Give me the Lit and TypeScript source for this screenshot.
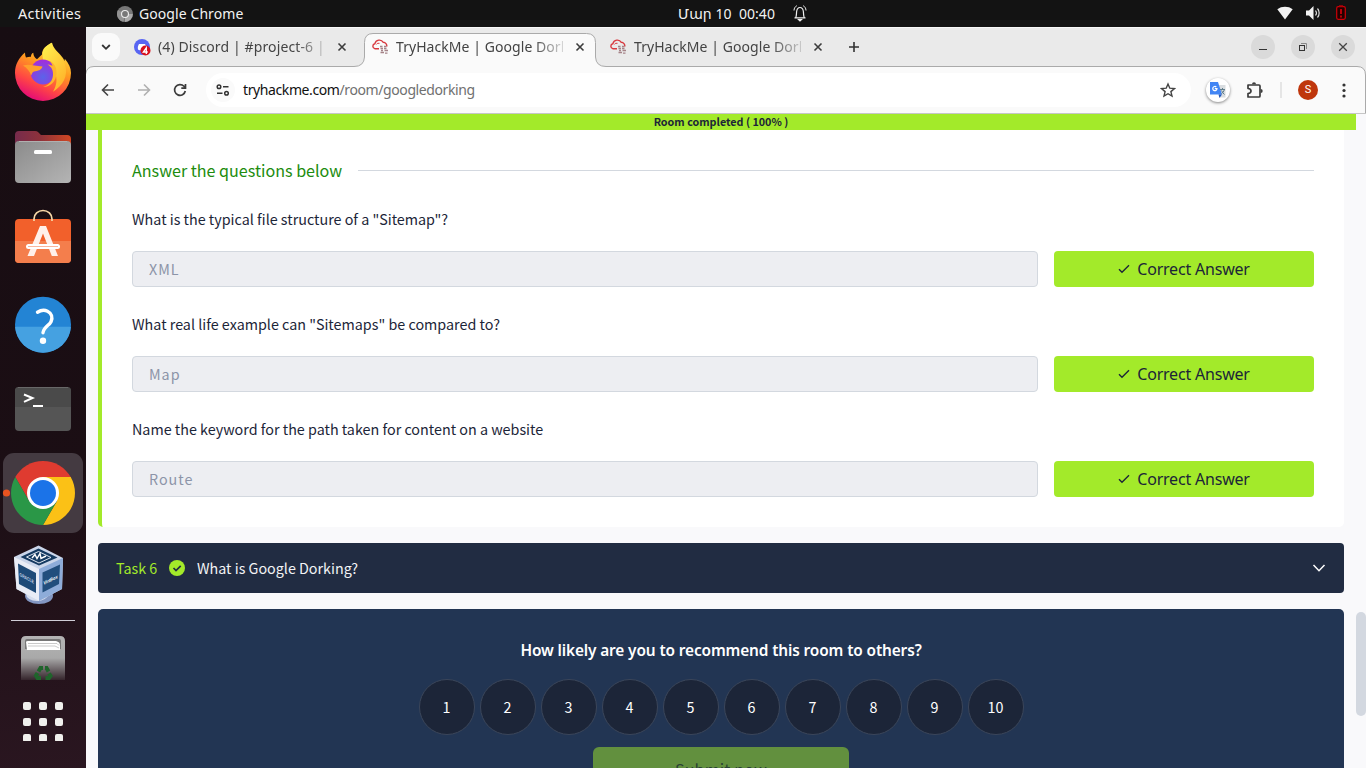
import { LitElement, html, css, svg } from "lit";
import { customElement } from "lit/decorators.js";

const UI = css`"Noto Sans", "Open Sans", sans-serif`;
const BODY = css`"Noto Sans CJK SC", "Noto Sans", sans-serif`;

@customElement("top-bar")
class TopBar extends LitElement {
  static styles = css`
    :host { display: flex; height: 27px; background: #131313; color: #f2f2f2; font: 14px/27px ${UI}; position: relative; white-space: pre; }
    .act { margin-left: 18px; width: 99px; font-size: 14.500px; letter-spacing: .28px; }
    .app { display: flex; align-items: center; width: 561px; letter-spacing: .08px; }
    .app svg { margin-right: 6px; }
    .clock { display: flex; align-items: center; width: 599px; }
    .date { width: 115px; font-family: "Noto Sans", "DejaVu Sans", sans-serif; letter-spacing: .05px; }
    .tray { display: flex; align-items: center; gap: 0; }
    svg { display: block; flex: none; }
  `;
  render() {
    return html`
      <span class="act">Activities</span>
      <span class="app">
        <svg width="16" height="16" viewBox="0 0 16 16"><circle cx="8" cy="8" r="8" fill="#777"/><path d="M8 8 1 4a8 8 0 0 0 5.500 11.800z" fill="#929292"/><path d="M8 8h7.800A8 8 0 0 1 8 16z" fill="#a9a9a9"/><circle cx="8" cy="8" r="4" fill="#ededed"/><circle cx="8" cy="8" r="2.900" fill="#777"/></svg>
        <span>Google Chrome</span>
      </span>
      <span class="clock"><span class="date">Մար 10  00:40</span>
        <svg width="14" height="17" viewBox="0 0 14 17" fill="none" stroke="#f0f0f0" stroke-width="1.200"><path d="M1.500 12.800h11M2.800 12.500C3.500 11 3.400 9 3.600 6.700 3.900 4 5.200 2.500 7 2.500S10.100 4 10.400 6.700c.2 2.300.1 4.300.8 5.800"/><path d="M5.500 14.500h3L7 16z" fill="#f0f0f0"/><path d="M3.800.7C2 1.800 1.100 3.200 1 5.500M10.200.7c1.800 1.100 2.700 2.500 2.800 4.800" stroke-width="1"/></svg>
      </span>
      <span class="tray">
        <svg width="89" height="27" viewBox="0 0 89 27"><path d="M.3 9.200C4.700 5.900 11.300 5.900 15.700 9.200L8 19.500z" fill="#f2f2f2"/><path d="M29 10.500h3L36.500 6v14L32 15.500h-3z" fill="#f2f2f2"/><path d="M38.500 10.500c1.200 1.500 1.200 3.500 0 5M40.500 8.500c2.200 2.500 2.200 6.500 0 9" fill="none" stroke="#ddd" stroke-width="1.200"/><rect x="59.700" y="6.700" width="8.600" height="12.600" rx="1.500" fill="#220000" stroke="#cc0007" stroke-width="1.200"/><path d="M62 5.200h4V7h-4zM63 9h2v5h-2zM63 15.500h2v2h-2z" fill="#b40008"/></svg>
      </span>`;
  }
}

@customElement("app-dock")
class AppDock extends LitElement {
  static styles = css`
    :host { display: flex; flex-direction: column; width: 86px; padding-top: 3px; box-sizing: border-box; background: linear-gradient(175deg, #170d12 0%, #1b0e14 60%, #2a1620 100%); overflow: hidden; }
    svg { display: block; flex: none; }
    .brand { font: bold 5px "Liberation Sans", sans-serif; }
  `;
  render() {
    return html`
      <svg width="86" height="84" viewBox="0 1.500 86 84">
        <defs>
          <linearGradient id="fx" x1=".75" y1="0" x2=".3" y2="1"><stop offset="0" stop-color="#fff04a"/><stop offset=".4" stop-color="#ff9a1f"/><stop offset=".72" stop-color="#ff4545"/><stop offset="1" stop-color="#e1067c"/></linearGradient>
          <radialGradient id="fp" cx=".5" cy=".7" r=".7"><stop offset="0" stop-color="#5b63ea"/><stop offset="1" stop-color="#a42cda"/></radialGradient>
          <linearGradient id="fy" x1="0" y1="0" x2=".6" y2="1"><stop offset="0" stop-color="#fff44f"/><stop offset="1" stop-color="#ffb42b"/></linearGradient>
        </defs>
        <path d="M25 24c0 2 .5 4 1 5 1.700-.6 3.500-.8 5-.7 0-2 .8-3.600 2.300-4 .2 3.200 1.200 4.800 3.700 6.400L42 26c0-5.500 4-9 10-11.700 1 5.500 6 9 9.500 13.500 1.500 1.400 2.500 3.500 3 5l.3-2.500c4 4.500 6.200 9.200 6.200 14.200a28 28 0 0 1-56 0c0-9 4-15 10-20.500z" fill="url(#fx)"/>
        <path d="M42.500 26c0-5.500 4-9 9.500-11.700-.5 7 10 11.500 13 21.500 3.500 12-2 21.500-12 27.500 4-7 4.500-13 2-19C53 37 47 34 43 32z" fill="url(#fy)"/>
        <circle cx="43" cy="43.500" r="12.500" fill="url(#fp)"/>
        <path d="M49 32c5 2 8 7 7.500 13-.5 8-6 13.500-13.500 13.500 6-2 9.500-6 10-12 .3-4-1-8-5.500-10.500 3 .5 4 .8 5 1.500-.5-2.500-2-4.500-3.500-5.500z" fill="#ffb52c"/>
        <path d="M23 37c6-2 11 .5 19.500 1-1 3.500-4.500 4.500-8.500 5-2 1-2 2.500-3 4-1-4-4-7.500-8-10z" fill="#ffa02b"/>
      </svg>
      <svg width="86" height="84" viewBox="0 0 86 84">
        <defs><linearGradient id="fo"><stop stop-color="#762b4c"/><stop offset=".45" stop-color="#8e323b"/><stop offset="1" stop-color="#d14722"/></linearGradient><linearGradient id="fg" x1="0" y1="0" x2="1" y2="1"><stop stop-color="#8b8b8b"/><stop offset="1" stop-color="#b4b4b4"/></linearGradient></defs>
        <path d="M15 40V21q0-4 4-4h16q2 0 3 1l3 3h26q4 0 4 4v15z" fill="url(#fo)"/>
        <rect x="15" y="27" width="56" height="42" rx="4" fill="url(#fg)"/><path d="M19 27.500h48" stroke="#b0b0b0"/><rect x="34" y="36" width="18" height="4" rx="1.500" fill="#fff"/>
      </svg>
      <svg width="86" height="84" viewBox="0 0 86 84">
        <rect x="15" y="21" width="56" height="44" rx="4" fill="#f2602b"/><path d="M15 43h56v18q0 4-4 4H19q-4 0-4-4z" fill="#f47e4c"/>
        <path d="M34 23v-2a9 8.500 0 0 1 18 0v2" fill="none" stroke="#f6d7a6" stroke-width="1.700"/>
        <path d="M40 28h6l12 30h-6.200L43 35.500 34 58h-6.500z" fill="#fff0ea"/><rect x="26" y="46" width="34" height="5" rx="2.500" fill="#fff"/><path d="M28 48.500h30" stroke="#f9b69d"/>
      </svg>
      <svg width="86" height="84" viewBox="0 .3 86 84">
        <circle cx="43" cy="43" r="28" fill="#2384d4"/><path d="M15.070 45a28 28 0 0 0 55.860 0z" fill="#45a1e1"/>
        <path d="M37.500 30.500c3.500-2.200 7-2.400 10-1 4 2 5.500 6 3.500 10.500-1.700 3.700-7.500 5.500-8 11" fill="none" stroke="#fff" stroke-width="3.400" stroke-linecap="round"/><circle cx="43" cy="59" r="3.200" fill="#fff"/>
      </svg>
      <svg width="86" height="84" viewBox="0 0 86 84">
        <rect x="15" y="21" width="56" height="44" rx="4" fill="#555"/><path d="M15 41V25q0-4 4-4h48q4 0 4 4v16z" fill="#4a4a4a"/><path d="M18 21.500h50" stroke="#686868"/>
        <path d="M24 28.500l8.500 3.500-8.500 3.800" fill="none" stroke="#fff" stroke-width="2"/><path d="M33 40h10" stroke="#fff" stroke-width="2"/>
      </svg>
      <svg width="86" height="84" viewBox="0 0 86 84">
        <rect x="3" y="3" width="80" height="80" rx="11" fill="#443a41"/><circle cx="6.500" cy="43" r="3.600" fill="#e95420"/>
        <path d="M15.300 27a32 32 0 0 1 55.400 0L43 43 29.100 51z" fill="#df3b30"/>
        <path d="M70.700 27A32 32 0 0 1 43 75l14-24V27z" fill="#fbc116"/>
        <path d="M15.300 27A32 32 0 0 0 43 75l13.900-24H29.100z" fill="#2a9747"/>
        <path d="M43 27h27.700L57 51z" fill="#fbc116"/><circle cx="43" cy="43" r="16" fill="#fff"/><circle cx="43" cy="43" r="13" fill="#1b73e8"/>
      </svg>
      <svg width="86" height="84" viewBox="0 0 86 84">
        <ellipse cx="39" cy="62" rx="14" ry="8" fill="#8397c2"/><ellipse cx="37" cy="60" rx="11" ry="7" fill="#d6deee"/>
        <path d="M38.500 11.500L14 23l2.500 32L39 67l23-12 1-31z" fill="#cbd6ea"/><path d="M14 23l25 12v32L16.500 55z" fill="#e9edf6"/><path d="M39 35l24-11-1 31-23 12z" fill="#8eacd9"/>
        <path d="M38.500 14.500L20.500 23 39 31.500 57.500 23.500z" fill="#153a61"/><path d="M38.500 17.500L26.500 23 39 29l12-5.500z" fill="none" stroke="#dce4ef" stroke-width="1"/><path d="M32 24l3-3.500 2 4 3-5 1 5 5-2.500" fill="none" stroke="#fff" stroke-width="1.400"/>
        <path d="M18 29.500L36 39v20L19 50z" fill="#1e4b78"/><path d="M42.500 38.500L60 30.500 59 50l-16.500 8.500z" fill="#214e7d"/>
        <text class="brand" transform="matrix(.68 .36 0 1 19.500 42)" fill="#c9d7e8">ORACLE</text><text class="brand" transform="matrix(.8 -.38 0 1 43.500 51)" fill="#fff">VirtBox</text>
      </svg>
      <svg width="86" height="123" viewBox="0 0 86 123">
        <defs><linearGradient id="tr" x1="0" y1="0" x2="0" y2="1"><stop stop-color="#b4b4b4"/><stop offset=".5" stop-color="#a9a9a9"/><stop offset="1" stop-color="#35252c"/></linearGradient></defs>
        <path d="M11 2.500h64" stroke="#d0ced6"/>
        <path d="M21 62V23q0-5 5-5h34q5 0 5 5v39z" fill="url(#tr)"/><path d="M25 31v-8q0-2 2-2h32q2 0 2 2v8z" fill="#777"/><path d="M27 32l-1-8q0-1 2-1h28q4 1 4 4v5z" fill="#fff"/><path d="M28 25.500h29l2 2M28 28h27l4 2" fill="none" stroke="#bbb" stroke-width=".8"/>
        <g fill="none" stroke="#1f642b" stroke-width="4"><path d="M38.500 53.500L40.500 50h2.500M45 50h1.500l2 3.500M41 60h-3.500l-1.500-2.500 1.500-2.500M49 55.500l1.500 2.500-1.500 2h-3.500"/></g>
        <g fill="#f0f0ed">${[84, 100, 116].map((y) => [23, 39, 55].map((x) => svg`<rect x=${x} y=${y} width="8" height="8" rx="2"/>`))}</g>
      </svg>`;
  }
}

const thmIcon = html`<svg class="fav" width="17" height="17" viewBox="0 0 17 17"><path d="M7 9.800H3A2.600 2.600 0 0 1 2.900 4.700 4.600 4.600 0 0 1 11.300 3.300 3.700 3.700 0 0 1 14.800 7.500" fill="none" stroke="#d8393f" stroke-width="1.400"/><path d="M4.500 5.300q1-1.500 3-1" fill="none" stroke="#d8393f"/><path d="M8 7.500h2.500M12 7.500h2.500M8.500 9.500h2.500M12 9.500h2.500M9 11.500h2M12.500 11.500h3.500M8.500 13.500h3.500M13 14.200h2.500" stroke="#a58388" stroke-width="1.300"/></svg>`;
const closeIcon = html`<svg class="x" width="10" height="10" viewBox="0 0 10 10"><path d="M1.500 1.500l7 7M8.500 1.500l-7 7" stroke="#3c3c3c" stroke-width="1.600"/></svg>`;

@customElement("browser-head")
class BrowserHead extends LitElement {
  static styles = css`
    :host { display: block; height: 87px; position: relative; background: #eaeaea; z-index: 0; font-family: ${UI}; color: #444; }
    .shape { position: absolute; left: 0; top: 0; z-index: -1; }
    svg { display: block; flex: none; }
    .tabs, .tools { display: flex; align-items: center; }
    .tabs { height: 40px; font-size: 14px; }
    .tools { height: 46px; }
    .search { width: 28px; height: 28px; border-radius: 9px; background: #fafafa; margin: 0 14px 0 6px; display: grid; place-items: center; }
    .tab { display: flex; align-items: center; width: 238px; }
    .fav { margin-right: 7px; }
    .name { width: 167px; overflow: hidden; white-space: nowrap; line-height: 24px; letter-spacing: .06px; mask-image: linear-gradient(90deg, #000 82%, #0003 100%); }
    .x { margin-left: 12px; }
    .wide { letter-spacing: .12px; }
    .win { display: flex; gap: 16px; margin-left: auto; margin-right: 11px; }
    .win span { width: 24px; height: 24px; border-radius: 50%; background: #dadada; display: grid; place-items: center; }
    .nav { display: flex; gap: 20px; margin-left: 14px; }
    .url { display: flex; align-items: center; height: 34px; width: 985px; margin-left: 18px; border-radius: 17px; background: #fff; color: #707070; font-size: 14px; letter-spacing: -.4px; }
    .info { width: 24px; height: 24px; margin: 0 8px 0 5px; border-radius: 50%; background: #fafafa; display: grid; place-items: center; }
    .addr { padding-bottom: 2px; }
    .url b { font-weight: 400; color: #111; }
    .star { margin-left: auto; margin-right: 15px; }
    .gt { width: 24px; height: 24px; border-radius: 50%; background: #fff; box-shadow: 0 1px 3px #0007; margin-left: 15px; display: grid; place-items: center; }
    .ext { margin-left: 16px; }
    .sep { width: 2px; height: 16px; background: #e5e5e5; margin-left: 17px; }
    .user { width: 20px; height: 20px; border-radius: 50%; background: #bf360c; color: #fff; font: 11px/20px Roboto, sans-serif; text-align: center; margin-left: 16px; }
    .dots { margin-left: 24px; }
  `;
  render() {
    return html`
      <svg class="shape" width="1280" height="87" viewBox="0 0 1280 87"><path d="M0 .5h1280" stroke="#f8f8f8"/><path d="M-.5 90V47.500Q.5 39.500 8 39.500H268Q278 39.500 278.500 30V15.500Q278.500 6.500 287 6.500H500.500Q509.500 6.500 509.500 15.500V30Q510 39.500 520 39.500H1271Q1279.500 39.500 1279.500 48V90z" fill="#fafafa" stroke="#aaa"/><path d="M0 86.500h1280" stroke="#c6c6c6"/></svg>
      <div class="tabs">
        <div class="search"><svg width="10" height="8" viewBox="0 0 10 8"><path d="M1.200 2L5 5.800 8.800 2" fill="none" stroke="#333" stroke-width="1.800"/></svg></div>
        <div class="tab"><svg class="fav" width="17" height="17" viewBox="0 0 17 17"><circle cx="8" cy="8" r="8" fill="#5865f2"/><path d="M4 10.500c-.5-2 0-4 1-5.500h6c1 1.500 1.500 3.500 1 5.500-2 1.500-6 1.500-8 0z" fill="#fff"/><circle cx="11.500" cy="11.500" r="5" fill="#d8101c"/><path d="M12.300 15V8.800L9.300 13h4.500" fill="none" stroke="#fff" stroke-width="1.300"/></svg><span class="name wide">(4) Discord | #project-6 |</span>${closeIcon}</div>
        <div class="tab">${thmIcon}<span class="name">TryHackMe | Google Dorking</span>${closeIcon}</div>
        <div class="tab">${thmIcon}<span class="name">TryHackMe | Google Dorking</span>${closeIcon}</div>
        <svg width="12" height="12" viewBox="0 0 12 12"><path d="M6 1v10M1 6h10" stroke="#333" stroke-width="1.600"/></svg>
        <div class="win">
          <span><svg width="10" height="10"><path d="M1 7.500h8" stroke="#333"/></svg></span>
          <span><svg width="10" height="10"><path d="M3 1.500h5.500v5.500" fill="none" stroke="#888"/><rect x="1.500" y="3.500" width="5" height="5" fill="none" stroke="#333"/></svg></span>
          <span><svg width="10" height="10"><path d="M1.200 1.200l7.600 7.600M8.800 1.200L1.200 8.800" stroke="#444" stroke-width="1.300"/></svg></span>
        </div>
      </div>
      <div class="tools">
        <div class="nav">
          <svg width="16" height="16" viewBox="0 0 16 16" fill="none" stroke="#444" stroke-width="1.600"><path d="M14 8H3M8 2.500L2.500 8 8 13.500"/></svg>
          <svg width="16" height="16" viewBox="0 0 16 16" fill="none" stroke="#b0b0b0" stroke-width="1.600"><path d="M2 8h11M8 2.500L13.500 8 8 13.500"/></svg>
          <svg width="16" height="16" viewBox="0 0 16 16" fill="none" stroke="#3c3c3c" stroke-width="1.700"><path d="M13.300 9A5.400 5.400 0 1 1 12 4.300L13.500 6M13.500 2v4.200H9.300"/></svg>
        </div>
        <div class="url">
          <span class="info"><svg width="14" height="12" viewBox="0 0 14 12" fill="none" stroke="#333" stroke-width="1.500"><circle cx="3" cy="2.800" r="1.800"/><path d="M7 2.800h5.500M1 9.200h5.500"/><circle cx="10.500" cy="9.200" r="1.800"/></svg></span>
          <span class="addr"><b>tryhackme.com</b>/room/googledorking</span>
          <svg class="star" width="16" height="16" viewBox="0 0 16 16"><path d="M8 2l1.800 4.200 4.600.4-3.500 3 1.100 4.500L8 11.700l-4 2.400 1.100-4.500-3.500-3 4.600-.4z" fill="none" stroke="#444" stroke-width="1.400"/></svg>
        </div>
        <div class="gt"><svg width="16" height="16" viewBox="0 0 16 16"><path d="M6 3h9.500v12.500H10z" fill="#d9dde0"/><path d="M0 0h8l4 12.500H0z" fill="#4285f4"/><path d="M8.500 12.500H12L9.500 16z" fill="#2457bb"/><path d="M6.300 5A2.100 2.100 0 1 0 7 6.600H4.800" fill="none" stroke="#fff" stroke-width="1.200"/><path d="M10 7.500h5M12.500 6v1.500M14.500 7.500q-1 3-3 4M11.500 8.500q1.500 3 3 4" fill="none" stroke="#607d8b"/></svg></div>
        <svg class="ext" width="17" height="17" viewBox="0 0 17 17"><path d="M2 3h11q1 0 1 1v10q0 1-1 1H2v-3.500q3-.3 3-2.500T2 6.500z" fill="none" stroke="#3c3c3c" stroke-width="1.700" stroke-linejoin="round"/><path d="M6 2.200a2 2 0 0 1 4 0zM14.700 7a2 2 0 0 1 0 4z" fill="#3c3c3c"/></svg>
        <div class="sep"></div>
        <div class="user">S</div>
        <svg class="dots" width="4" height="15" viewBox="0 0 4 15" fill="#333"><circle cx="2" cy="2" r="1.600"/><circle cx="2" cy="7.500" r="1.600"/><circle cx="2" cy="13" r="1.600"/></svg>
      </div>`;
  }
}

@customElement("room-page")
class RoomPage extends LitElement {
  static styles = css`
    :host { display: flex; flex: 1; min-height: 0; background: #f9f9fb; overflow: hidden; font-family: ${BODY}; color: #1c2538; }
    svg { display: block; flex: none; }
    .page { width: 1270px; flex: none; }
    .done { height: 16px; background: #a3ea2a; font: bold 10.750px/16px ${BODY}; text-align: center; }
    .stack { padding: 0 12px; display: flex; flex-direction: column; gap: 16px; }
    .card { box-sizing: border-box; height: 397px; background: #fff; border-left: 4px solid #a3ea2a; border-radius: 0 0 5px 5px; padding: 27px 30px 0; }
    .head { display: flex; align-items: center; gap: 16px; height: 27px; color: #218c0e; font-size: 16.100px; line-height: 27px; }
    .head i { flex: 1; height: 1px; background: #d3d8df; }
    .q { margin: 24px 0 0; height: 24px; font-size: 14.330px; line-height: 22px; }
    .row { display: flex; gap: 16px; margin-top: 19px; height: 36px; }
    .item + .item { margin-top: 26px; }
    .field { flex: 1; box-sizing: border-box; border: 1px solid #d3d8df; border-radius: 4px; background: #edeef2; padding-left: 16px; color: #8c94a8; font-size: 14.320px; line-height: 33px; letter-spacing: 1px; }
    .ok { width: 260px; border-radius: 4px; background: #a3ea2a; display: flex; align-items: center; justify-content: center; gap: 7px; font: 16px/36px ${UI}; letter-spacing: -.2px; }
    .task { height: 50px; border-radius: 4px; background: #212c42; color: #f2f3f5; display: flex; align-items: center; font-size: 14.320px; padding: 0 18px; }
    .task b { font-weight: 400; color: #a3ea2a; width: 53px; padding-bottom: 2px; }
    .task span { margin-left: 12px; padding-bottom: 2px; }
    .task .chev { margin-left: auto; }
    .rate { height: 260px; border-radius: 5px; background: #223553; display: flex; flex-direction: column; align-items: center; }
    .ask { margin-top: 30px; height: 24px; color: #fff; font: 600 15.400px/24px ${UI}; letter-spacing: -.12px; }
    .nums { display: flex; gap: 5px; margin-top: 16px; }
    .nums span { box-sizing: border-box; width: 56px; height: 56px; border-radius: 50%; background: #1c2538; border: 1px solid #3b465a; color: #fff; font-size: 14.320px; line-height: 54px; text-align: center; }
    .send { width: 256px; height: 46px; margin-top: 12px; border-radius: 6px; background: #62903e; color: #294234; font-size: 16px; line-height: 45px; letter-spacing: .2px; text-align: center; }
    .scroll { width: 10px; padding-top: 498px; }
    .thumb { height: 104px; border-radius: 5px; background: #d3d8e0; }
  `;
  private items = [
    ['What is the typical file structure of a "Sitemap"?', "XML"],
    ['What real life example can "Sitemaps" be compared to?', "Map"],
    ["Name the keyword for the path taken for content on a website", "Route"],
  ];
  render() {
    return html`
      <div class="page">
        <div class="done">Room completed ( 100% )</div>
        <div class="stack">
          <section class="card">
            <div class="head"><span>Answer the questions below</span><i></i></div>
            ${this.items.map(([q, a]) => html`<div class="item">
              <p class="q">${q}</p>
              <div class="row"><div class="field">${a}</div>
                <div class="ok"><svg width="12" height="10" viewBox="0 0 12 10"><path d="M1 5.300L4 8.300 11 1.300" fill="none" stroke="#1c2538" stroke-width="1.400"/></svg><span>Correct Answer</span></div></div>
            </div>`)}
          </section>
          <section class="task"><b>Task 6</b><svg width="16" height="16" viewBox="0 0 16 16"><circle cx="8" cy="8" r="8" fill="#a3ea2a"/><path d="M4.500 8l2.500 2.500L11.700 5.800" fill="none" stroke="#212c42" stroke-width="1.700"/></svg><span>What is Google Dorking?</span>
            <svg class="chev" width="14" height="10" viewBox="0 0 14 10"><path d="M1.500 2L7 7.700 12.500 2" fill="none" stroke="#fff" stroke-width="1.500"/></svg></section>
          <section class="rate">
            <div class="ask">How likely are you to recommend this room to others?</div>
            <div class="nums">${Array.from({ length: 10 }, (_, i) => html`<span>${i + 1}</span>`)}</div>
            <div class="send">Submit now</div>
          </section>
        </div>
      </div>
      <div class="scroll"><div class="thumb"></div></div>`;
  }
}

@customElement("app-root")
class AppRoot extends LitElement {
  static styles = css`
    :host { display: flex; flex-direction: column; width: 1366px; height: 768px; overflow: hidden; }
    .desk { display: flex; height: 741px; }
    .window { display: flex; flex-direction: column; width: 1280px; height: 741px; }
  `;
  render() {
    return html`<top-bar></top-bar>
      <div class="desk"><app-dock></app-dock>
        <div class="window"><browser-head></browser-head><room-page></room-page></div>
      </div>`;
  }
}
